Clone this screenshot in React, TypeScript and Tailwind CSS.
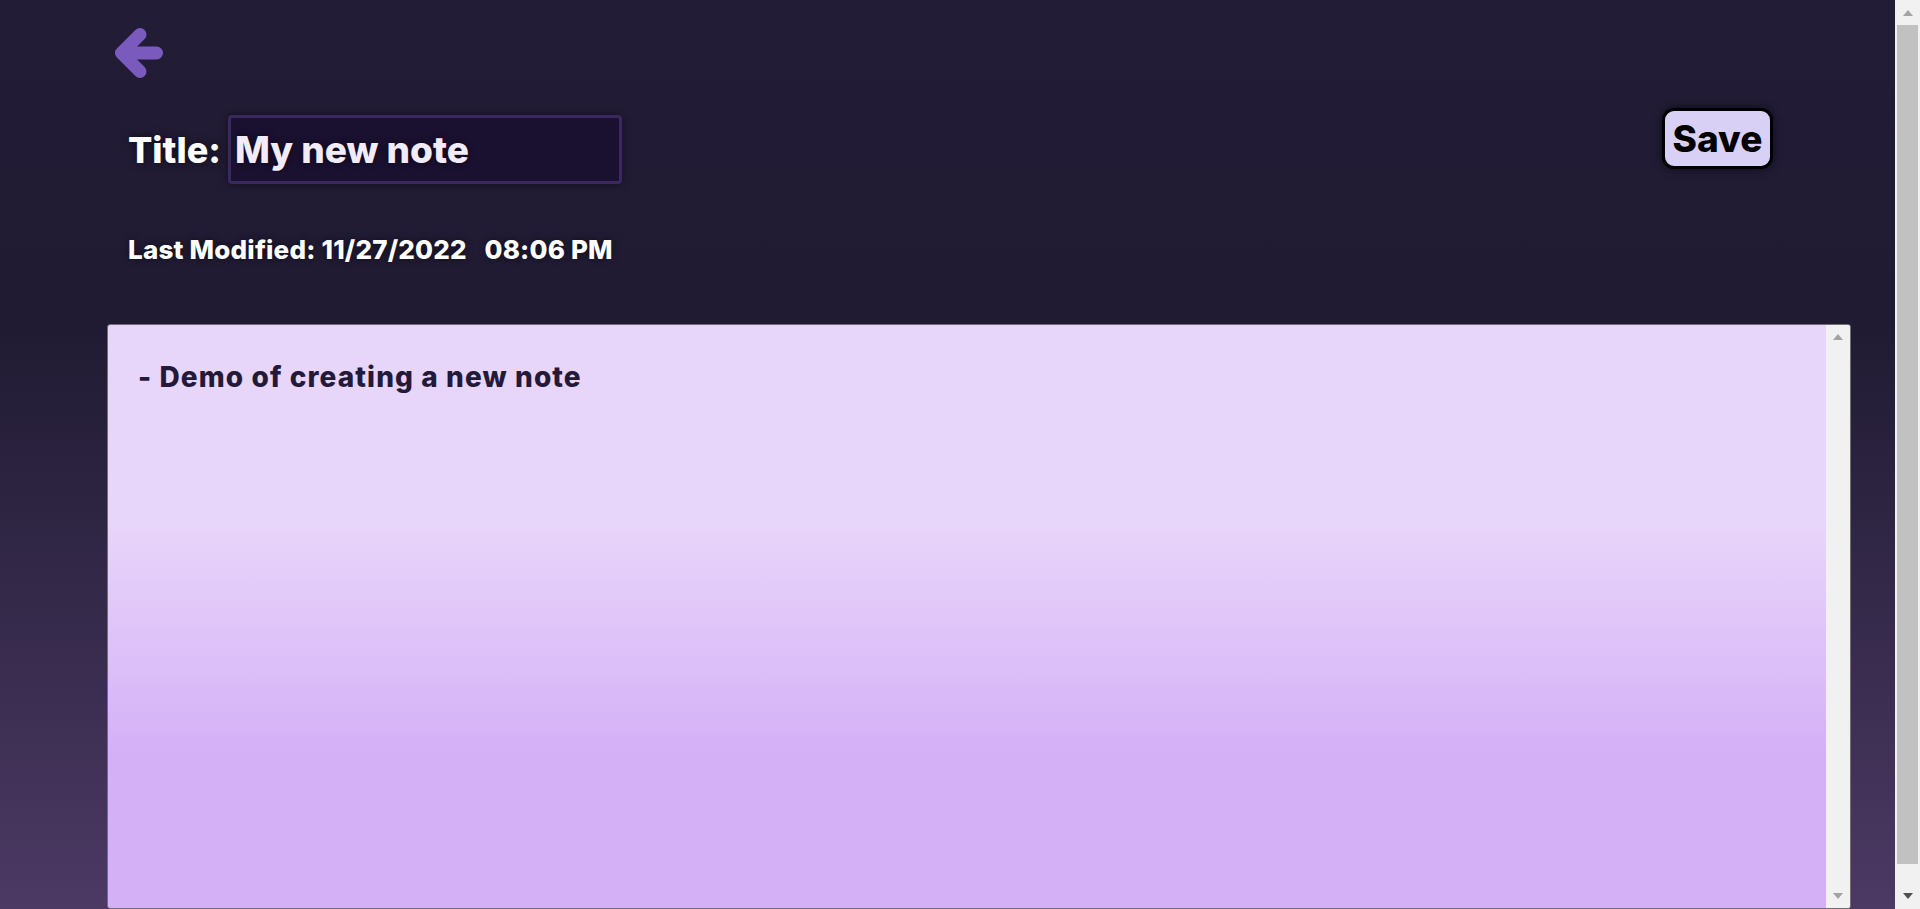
import React from "react";

function BackArrow() {
  return (
    <svg width="48" height="51" viewBox="0 0 48 51" aria-hidden="true">
      <polyline
        points="25,7.5 6.5,26 25,44.5"
        fill="none"
        stroke="#7a5bbd"
        strokeWidth="13"
        strokeLinecap="round"
        strokeLinejoin="round"
      />
      <line x1="7" y1="26" x2="41.5" y2="26" stroke="#7a5bbd" strokeWidth="13" strokeLinecap="round" />
    </svg>
  );
}

function Tri({ up, color }: { up: boolean; color: string }) {
  return (
    <svg width="10" height="6" viewBox="0 0 10 6" aria-hidden="true">
      <polygon points={up ? "5,0 10,6 0,6" : "0,0 10,0 5,6"} fill={color} />
    </svg>
  );
}

export default function App() {
  const font = { fontFamily: "Inter, 'Noto Sans', sans-serif" };
  return (
    <div className="flex h-[909px] w-full overflow-hidden" style={font}>
      <main className="flex h-full w-[1895px] shrink-0 flex-col bg-[linear-gradient(to_bottom,#221c36_0%,#201b33_36%,#4c3964_100%)]">
        <div className="pl-[115px] pt-[27px]">
          <BackArrow />
        </div>

        <div className="mt-[30px] flex items-start justify-between pl-[128px] pr-[122px]">
          <div className="mt-[7px] flex items-center gap-[7px]">
            <span className="text-[36px] font-extrabold leading-[40px] text-white [text-shadow:0_0_8px_rgba(0,0,0,0.7)]">
              Title:
            </span>
            <input
              defaultValue="My new note"
              className="h-[69px] w-[394px] rounded-[4px] border-[3px] border-[#3b285f] bg-[#1a1030] pl-[4px] text-[37px] font-extrabold text-[#f1ebfa] shadow-[0_0_8px_rgba(0,0,0,0.45)] outline-none [text-shadow:0_0_6px_rgba(0,0,0,0.6)]"
            />
          </div>
          <button className="flex h-[61px] w-[111px] items-center justify-center rounded-[12px] border-[3px] border-black bg-[#d9d1f5] text-[37px] font-extrabold text-black shadow-[0_0_10px_rgba(0,0,0,0.6)]">
            Save
          </button>
        </div>

        <div className="mt-[52px] pl-[128px] text-[26px] font-extrabold leading-[28px] tracking-[0.2px] text-white [text-shadow:0_0_6px_rgba(0,0,0,0.6)]">
          Last Modified: 11/27/2022&nbsp;&nbsp;&nbsp;08:06 PM
        </div>

        <div className="ml-[107px] mt-[60px] flex h-[585px] w-[1744px] shrink-0 overflow-hidden rounded-[3px] border border-[#6e6e74] bg-[linear-gradient(to_bottom,#e8d5fa_200px,#d4b0f7_430px)]">
          <textarea
            defaultValue="- Demo of creating a new note"
            className="h-full flex-1 resize-none overflow-hidden bg-transparent pl-[30px] pt-[38px] text-[28px] font-extrabold leading-[28px] tracking-[1.1px] text-[#221a38] outline-none"
            style={font}
          />
          <div className="flex h-full w-[24px] flex-col items-center justify-between bg-[#f1f1f1] py-[9px]">
            <Tri up color="#a3a3a3" />
            <Tri up={false} color="#a3a3a3" />
          </div>
        </div>
      </main>

      <div className="flex h-full w-[25px] shrink-0 flex-col items-center bg-[#f1f1f1]">
        <div className="flex h-[25px] items-center justify-center">
          <Tri up color="#a3a3a3" />
        </div>
        <div className="flex w-full flex-1 px-[2px]">
          <div className="h-[839px] w-full bg-[#c1c1c1]" />
        </div>
        <div className="flex h-[22px] items-center justify-center pb-[4px]">
          <Tri up={false} color="#505050" />
        </div>
      </div>
    </div>
  );
}
